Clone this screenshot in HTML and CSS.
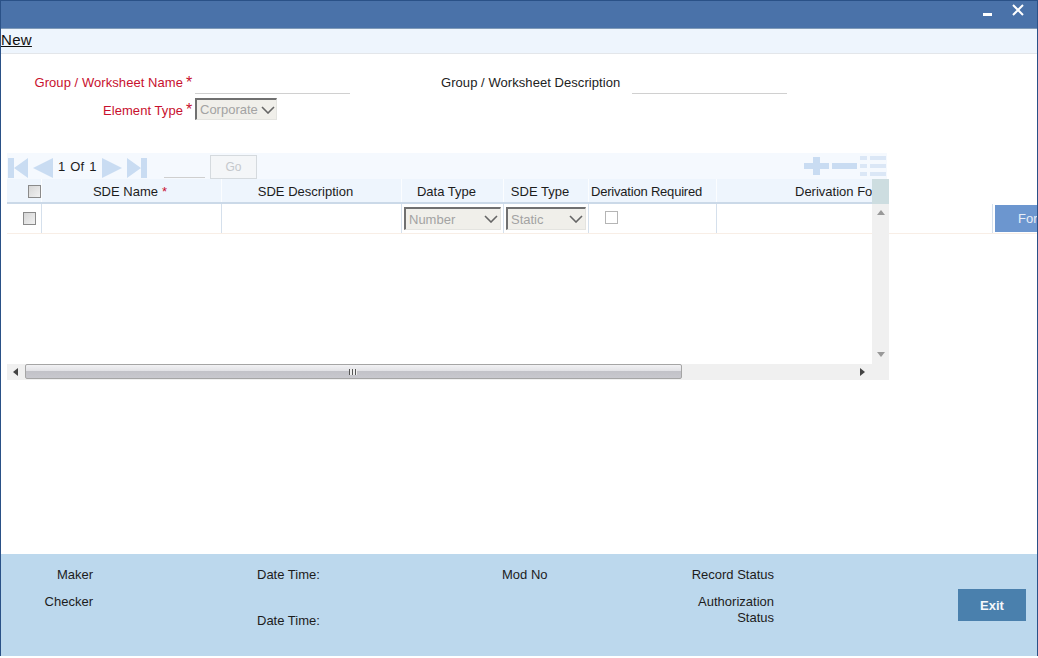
FILE: index.html
```html
<!DOCTYPE html>
<html lang="en">
<head>
<meta charset="utf-8">
<title>Group / Worksheet</title>
<link rel="stylesheet" href="styles.css">
</head>
<body>
<div class="window">
  <header class="titlebar">
    <span class="min-icon"></span>
    <svg class="close-icon" width="12" height="12" viewBox="0 0 12 12"><path d="M1 1L11 11M11 1L1 11" stroke="#fff" stroke-width="2" fill="none"/></svg>
  </header>
  <nav class="menubar"><a class="menu-new">New</a></nav>
  <section class="form">
    <div class="form-row first">
      <label class="label req">Group / Worksheet Name</label><span class="star">*</span>
      <span class="line-input name-input"></span>
      <label class="label desc-label">Group / Worksheet Description</label>
      <span class="line-input desc-input"></span>
    </div>
    <div class="form-row second">
      <label class="label req">Element Type</label><span class="star">*</span>
      <div class="select element-select"><span>Corporate</span><svg class="chev" width="14" height="8" viewBox="0 0 14 8"><path d="M1 1L7 7L13 1" stroke="#666" stroke-width="1.6" fill="none"/></svg></div>
    </div>
  </section>
  <section class="grid">
    <div class="toolbar">
      <svg class="nav-icon" width="20" height="22" viewBox="0 0 20 22"><path d="M0 1H6V21H0ZM6 11L20 1V21Z" fill="#c9dcf2"/></svg>
      <svg class="nav-icon prev" width="20" height="22" viewBox="0 0 20 22"><path d="M0 11L20 1V21Z" fill="#c9dcf2"/></svg>
      <span class="pager">1 Of 1</span>
      <svg class="nav-icon next" width="20" height="22" viewBox="0 0 20 22"><path d="M20 11L0 1V21Z" fill="#c9dcf2"/></svg>
      <svg class="nav-icon prev" width="20" height="22" viewBox="0 0 20 22"><path d="M14 1H20V21H14ZM14 11L0 1V21Z" fill="#c9dcf2"/></svg>
      <span class="page-input"></span>
      <span class="go">Go</span>
      <span class="tool-spacer"></span>
      <svg class="tool-icon" width="25" height="18" viewBox="0 0 25 18"><path d="M9 0H16V6H25V12H16V18H9V12H0V6H9Z" fill="#c9dcf2"/></svg>
      <svg class="tool-icon" width="25" height="18" viewBox="0 0 25 18"><path d="M0 6H25V12H0Z" fill="#c9dcf2"/></svg>
      <svg class="tool-icon" width="26" height="20" viewBox="0 0 26 20"><path d="M0 0H7V4H0ZM10 0H26V4H10ZM0 8H7V12H0ZM10 8H26V12H10ZM0 16H7V20H0ZM10 16H26V20H10Z" fill="#dbe7f6"/></svg>
    </div>
    <div class="head-row">
      <div class="cell c-check"><span class="check"></span></div>
      <div class="cell c-name">SDE Name <b class="mini-star">*</b></div>
      <div class="cell c-desc">SDE Description</div>
      <div class="cell c-data">Data Type</div>
      <div class="cell c-type">SDE Type</div>
      <div class="cell c-req">Derivation Required</div>
      <div class="cell c-form">Derivation Formula</div>
    </div>
    <div class="data-row">
      <div class="cell c-check"><span class="check"></span></div>
      <div class="cell c-name"></div>
      <div class="cell c-desc"></div>
      <div class="cell c-data"><div class="select row-select"><span>Number</span><svg class="chev" width="14" height="8" viewBox="0 0 14 8"><path d="M1 1L7 7L13 1" stroke="#666" stroke-width="1.6" fill="none"/></svg></div></div>
      <div class="cell c-type"><div class="select row-select"><span>Static</span><svg class="chev" width="14" height="8" viewBox="0 0 14 8"><path d="M1 1L7 7L13 1" stroke="#666" stroke-width="1.6" fill="none"/></svg></div></div>
      <div class="cell c-req"><span class="plain-check"></span></div>
      <div class="cell c-form"></div>
      <div class="cell c-btn"><span class="form-btn">Form</span></div>
    </div>
    <div class="corner"></div>
    <div class="vscroll">
      <svg class="arrow" width="8" height="5" viewBox="0 0 8 5"><path d="M4 0L8 5H0Z" fill="#999"/></svg>
      <svg class="arrow" width="8" height="5" viewBox="0 0 8 5"><path d="M0 0H8L4 5Z" fill="#999"/></svg>
    </div>
    <div class="hscroll">
      <svg class="h-arrow" width="5" height="8" viewBox="0 0 5 8"><path d="M5 0V8L0 4Z" fill="#444"/></svg>
      <div class="thumb"><span class="grip"></span></div>
      <svg class="h-arrow right" width="5" height="8" viewBox="0 0 5 8"><path d="M0 0V8L5 4Z" fill="#444"/></svg>
    </div>
  </section>
  <footer class="footer">
    <div class="foot-col col-maker">
      <span>Maker</span>
      <span>Checker</span>
    </div>
    <div class="foot-col col-date">
      <span>Date Time:</span>
      <span class="date-second">Date Time:</span>
    </div>
    <div class="foot-col col-mod"><span>Mod No</span></div>
    <div class="foot-col col-status">
      <span>Record Status</span>
      <span class="auth">Authorization<br>Status</span>
    </div>
    <button class="exit">Exit</button>
  </footer>
</div>
</body>
</html>
```
FILE: styles.css
```css
* { box-sizing: border-box; }
html, body { margin: 0; padding: 0; background: #fff; overflow: hidden; }
body { font-family: "Liberation Sans", Arial, sans-serif; font-size: 12px; color: #1c1c1c; }

.window {
  width: 1038px; height: 656px;
  display: flex; flex-direction: column;
  border-left: 1px solid #2a5187; border-right: 1px solid #2a5187;
  overflow: hidden;
}

.titlebar {
  height: 29px; flex: none;
  background: #4a72a9;
  border-top: 1px solid #2a5187;
  border-bottom: 1px solid #7f9ab8;
  display: flex; align-items: flex-start; justify-content: flex-end;
  padding: 3px 13px 0 0;
}
.min-icon { width: 9px; height: 3px; background: #fff; margin: 9px 20px 0 0; }
.close-icon { display: block; }

.menubar {
  height: 25px; flex: none;
  background: #eef5fd;
  border-bottom: 1px solid #e3e6ea;
  padding: 2px 0 0 0;
}
.menu-new { font-size: 15px; line-height: 17px; color: #111; text-decoration: underline; display: block; width: max-content; letter-spacing: 0.3px; }

.form { height: 99px; flex: none; padding-top: 15px; }
.form-row { display: flex; align-items: flex-start; }
.first { height: 25px; }
.second { height: 30px; padding-top: 4px; }
.label { font-size: 13px; line-height: 28px; white-space: nowrap; letter-spacing: 0.06px; }
.req { width: 182px; text-align: right; color: #c8102e; }
.second .label { line-height: 26px; }
.star { color: #c8102e; font-size: 16px; line-height: 28px; width: 12px; text-align: center; }
.second .star { line-height: 24px; }
.line-input { display: block; height: 25px; border-bottom: 1px solid #d0d0d0; }
.name-input { width: 155px; }
.desc-label { margin-left: 91px; width: 179px; color: #222; }
.desc-input { width: 155px; margin-left: 12px; }

.select {
  display: flex; align-items: center; justify-content: space-between;
  background: #f0efea;
  color: #a3a3a3;
  font-size: 13px;
  border-top: 2px solid #707070; border-left: 2px solid #707070;
  border-right: 1px solid #e4e4e0; border-bottom: 1px solid #e4e4e0;
}
.element-select { width: 82px; height: 22px; padding: 0 1px 0 3px; }
.row-select { width: 97px; height: 23px; padding: 0 2px 0 3px; }
.c-type .row-select { width: 80px; }

.grid { position: relative; height: 227px; flex: none; margin-left: 6px; width: 882px; }
.toolbar {
  height: 26px; width: 880px;
  background: #f5f9fe;
  display: flex; align-items: center;
  padding: 0 1px 0 1px;
}
.nav-icon { display: block; margin-top: 3px; }
.nav-icon.prev { margin-left: 5px; }
.pager { width: 49px; padding-left: 5px; font-size: 13px; white-space: nowrap; word-spacing: 1.5px; }
.page-input { width: 41px; height: 24px; border-bottom: 1px solid #cfcfcf; margin-left: 17px; }
.go {
  width: 47px; height: 24px; margin: 2px 0 0 5px;
  border: 1px solid #d5dade; background: #f4f6f8;
  color: #c4c8cc; text-align: center; line-height: 22px;
}
.tool-spacer { flex: 1; }
.tool-icon { display: block; margin-left: 3px; }

.head-row, .data-row { display: flex; }
.head-row {
  height: 25px; width: 865px; overflow: hidden;
  background: #eef5fd;
  border-bottom: 2px solid #cbd9e8;
}
.data-row { height: 30px; width: 1030px; border-bottom: 1px solid #f8eee6; }
.cell {
  flex: none; height: 100%;
  display: flex; align-items: center; justify-content: center;
  border-right: 1px solid #d5e0ec;
  white-space: nowrap; font-size: 13px;
}
.head-row .cell { border-right-color: #fbfdff; padding-top: 2px; }
.head-row .c-name { padding-right: 3px; }
.head-row .c-desc, .head-row .c-data, .head-row .c-type, .head-row .c-req { padding-right: 12px; }
.c-check { width: 35px; }
.c-name { width: 180px; }
.c-desc { width: 180px; }
.c-data { width: 102px; }
.c-type { width: 85px; }
.c-req { width: 128px; }
.data-row .c-req { justify-content: flex-start; padding-left: 16px; }
.head-row .c-req { letter-spacing: -0.2px; }
.c-form { width: 273px; justify-content: flex-start; padding-left: 78px; }
.c-btn { border-right: 0; width: 47px; justify-content: flex-start; padding-left: 2px; overflow: hidden; }
.data-row .c-form { width: 276px; }
.mini-star { color: #c8102e; font-weight: normal; margin-left: 4px; }

.check {
  width: 13px; height: 13px;
  border: 1px solid #8a8a8a;
  background: linear-gradient(135deg, #d6d6d6, #f1f1f1);
}
.head-row .check { margin-left: 20px; }
.data-row .check { margin-left: 10px; }
.plain-check {
  width: 13px; height: 13px; margin-top: -3px;
  border: 1px solid #b5b5b5; background: #fff;
}
.form-btn {
  display: block; width: 45px; height: 27px; flex: none;
  background: #6c96cf; color: #e8eef7;
  line-height: 27px; padding-left: 23px;
}

.corner { position: absolute; left: 865px; top: 26px; width: 17px; height: 25px; background: #cddde0; }
.vscroll {
  position: absolute; left: 865px; top: 51px; width: 17px; height: 160px;
  background: #f0f0f0;
  display: flex; flex-direction: column; align-items: center; justify-content: space-between;
  padding: 6px 0 7px;
}
.arrow { display: block; }
.hscroll {
  position: absolute; left: 0; top: 211px; width: 882px; height: 16px;
  background: #f0f0f0;
  display: flex; align-items: flex-start;
  padding-left: 6px;
}
.h-arrow { display: block; flex: none; margin-top: 4px; }
.h-arrow.right { margin-left: 178px; }
.thumb {
  width: 657px; height: 15px; margin-left: 7px; flex: none;
  border: 1px solid #a5a5a5; border-radius: 2px;
  background: linear-gradient(#f2f2f4, #e2e2e6 45%, #c2c2c8 50%, #c8c8ce);
  display: flex; align-items: center; justify-content: center;
  padding-right: 2px;
}
.grip {
  width: 8px; height: 6px;
  background: repeating-linear-gradient(90deg, #555 0 1px, #eee 1px 3px);
}

.footer {
  margin-top: auto; height: 102px; flex: none;
  background: #bcd8ed;
  display: flex; align-items: flex-start;
  position: relative;
}
.foot-col { display: flex; flex-direction: column; font-size: 13px; line-height: 16px; padding-top: 13px; flex: none; }
.col-maker { width: 92px; text-align: right; gap: 11px; }
.col-date { margin-left: 164px; width: 245px; }
.date-second { margin-top: 30px; }
.col-mod { width: 100px; }
.col-status { margin-left: 72px; width: 100px; text-align: right; gap: 11px; }
.auth { display: block; }
.exit {
  margin: 35px 0 0 184px; width: 68px; height: 32px; flex: none;
  border: 0; background: #4a80ad; color: #f4f8fb;
  font: bold 13px "Liberation Sans", Arial, sans-serif;
  padding: 0;
}
```
